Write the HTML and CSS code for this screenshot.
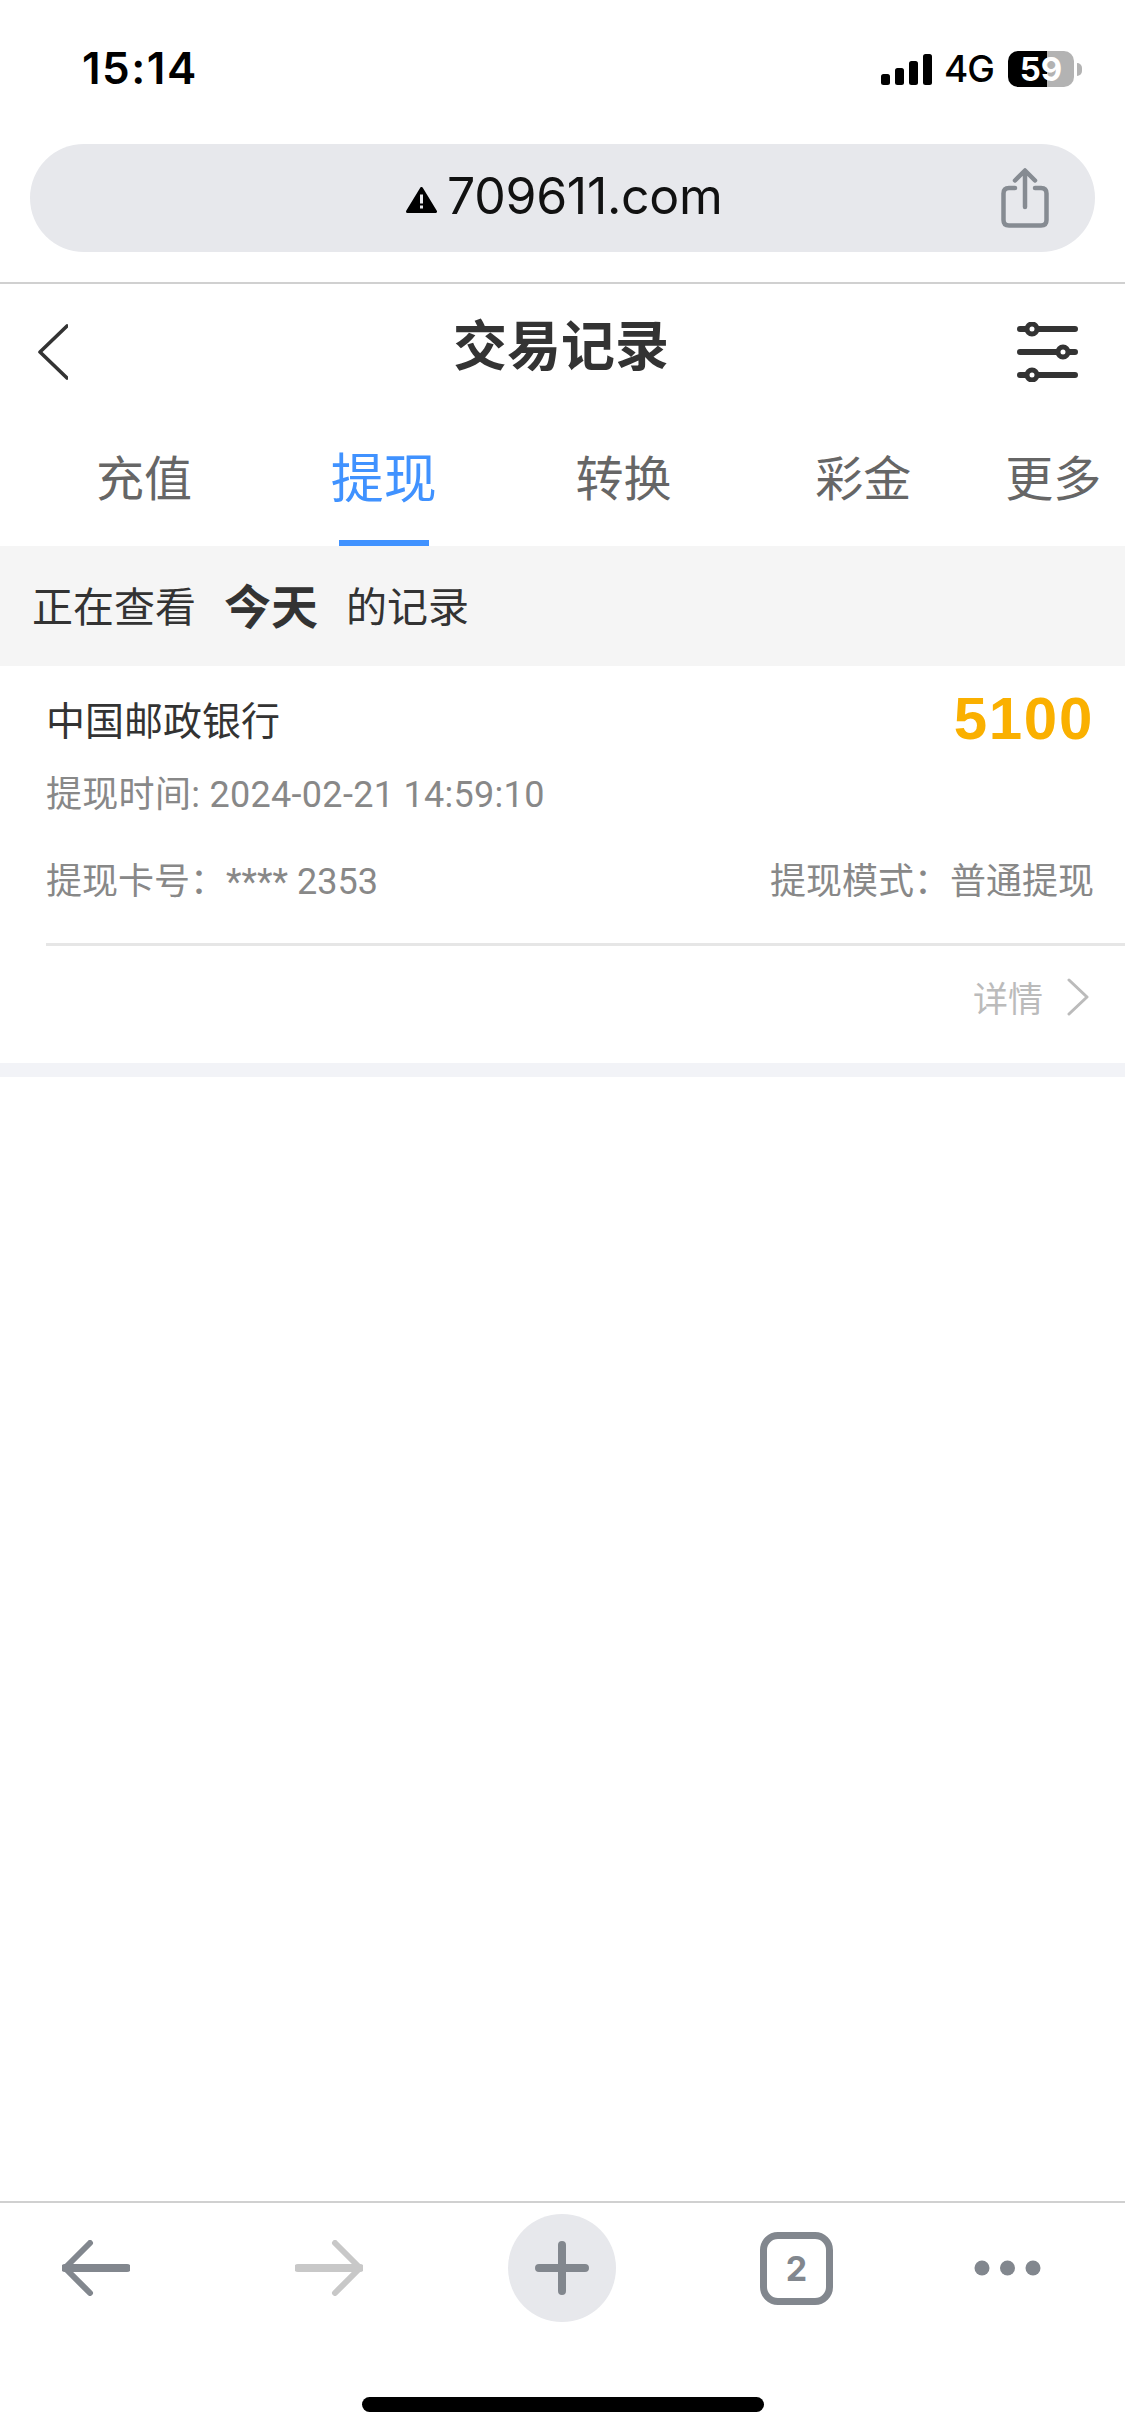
FILE: index.html
```html
<!DOCTYPE html>
<html>
<head>
    <meta charset="utf-8">
    <title>交易记录</title>
    <link rel="stylesheet" href="styles.css">
</head>
<body>
<div class="screen">
    <div class="status-bar">
        <span class="clock">15:14</span>
        <div class="status-right">
            <svg class="signal" width="51" height="31" viewBox="0 0 51 31">
                <rect x="0" y="20" width="9" height="11" rx="2.5"/>
                <rect x="14" y="14" width="9" height="17" rx="2.5"/>
                <rect x="28" y="7" width="9" height="24" rx="2.5"/>
                <rect x="42" y="0" width="9" height="31" rx="2.5"/>
            </svg>
            <span class="network">4G</span>
            <div class="battery"><span>59</span></div>
            <div class="battery-nub"></div>
        </div>
    </div>

    <div class="url-bar">
        <div class="url-text">
            <svg class="warn" width="31" height="26" viewBox="0 0 31 26">
                <path d="M15.5 1.5 L29.5 24.5 L1.5 24.5 Z" fill="#000" stroke="#000" stroke-width="3" stroke-linejoin="round"/>
                <rect x="14" y="7.5" width="3" height="9" fill="#e7e8ec"/>
                <rect x="14" y="18.5" width="3" height="3" fill="#e7e8ec"/>
            </svg>
            <span class="url-name">709611.com</span>
        </div>
        <svg class="share" width="48" height="60" viewBox="0 0 48 60" fill="none" stroke="#868b92" stroke-width="4.5" stroke-linecap="round" stroke-linejoin="round">
            <path d="M14 20 H8 Q2.500 20 2.500 25.500 V52 Q2.500 57.500 8 57.500 H40 Q45.500 57.500 45.500 52 V25.500 Q45.500 20 40 20 H34"/>
            <path d="M24 39 V3 M14 12.500 L24 2.500 L34 12.500"/>
        </svg>
    </div>

    <div class="page-head">
        <svg class="back" width="30" height="56" viewBox="0 0 30 56" fill="none" stroke="#333" stroke-width="3.6" stroke-linecap="round" stroke-linejoin="round">
            <path d="M29 2 L2 28 L29 54" />
        </svg>
        <h1>交易记录</h1>
        <svg class="filter" width="61" height="60" viewBox="0 0 61 60" fill="none" stroke="#333" stroke-width="6" stroke-linecap="round">
            <path d="M3 7 H58 M3 30 H58 M3 53 H58"/>
            <circle cx="15" cy="7" r="5" fill="#fff" stroke-width="5"/>
            <circle cx="46" cy="30" r="5" fill="#fff" stroke-width="5"/>
            <circle cx="15" cy="53" r="5" fill="#fff" stroke-width="5"/>
        </svg>
    </div>

    <div class="tabs">
        <div class="tab">充值</div>
        <div class="tab active">提现</div>
        <div class="tab">转换</div>
        <div class="tab">彩金</div>
        <div class="tab last">更多</div>
    </div>

    <div class="range-bar">
        <span>正在查看</span>
        <strong>今天</strong>
        <span>的记录</span>
    </div>

    <div class="record">
        <div class="record-top">
            <span class="bank">中国邮政银行</span>
            <span class="amount">5100</span>
        </div>
        <div class="record-line time-line">提现时间: 2024-02-21 14:59:10</div>
        <div class="record-line card-line">
            <span>提现卡号：**** 2353</span>
            <span>提现模式：普通提现</span>
        </div>
        <div class="record-foot">
            <span>详情</span>
            <svg width="23" height="38" viewBox="0 0 23 38" fill="none" stroke="#bbb" stroke-width="3" stroke-linecap="round" stroke-linejoin="round">
                <path d="M2 2 L20 19 L2 36"/>
            </svg>
        </div>
    </div>
    <div class="record-gap"></div>

    <div class="spacer"></div>

    <div class="toolbar">
        <svg width="68" height="56" viewBox="0 0 68 56" fill="none" stroke="#82878e" stroke-width="6" stroke-linecap="round" stroke-linejoin="round">
            <path d="M28 3 L3 28 L28 53"/>
            <path d="M3 28 H65" stroke-width="8"/>
        </svg>
        <svg class="forward" width="68" height="56" viewBox="0 0 68 56" fill="none" stroke="#c8c8c8" stroke-width="6" stroke-linecap="round" stroke-linejoin="round">
            <path d="M40 3 L65 28 L40 53"/>
            <path d="M65 28 H3" stroke-width="8"/>
        </svg>
        <div class="plus-btn">
            <svg width="54" height="54" viewBox="0 0 54 54" fill="none" stroke="#82878e" stroke-width="8" stroke-linecap="round">
                <path d="M27 4 V50 M4 27 H50"/>
            </svg>
        </div>
        <div class="tab-count">2</div>
        <svg class="dots" width="67" height="16" viewBox="0 0 67 16" fill="#82878e">
            <circle cx="8" cy="8" r="7.500"/>
            <circle cx="33.500" cy="8" r="7.500"/>
            <circle cx="59" cy="8" r="7.500"/>
        </svg>
    </div>
    <div class="home-area">
        <div class="home-bar"></div>
    </div>
</div>
</body>
</html>
```

FILE: styles.css
```css
* {
  box-sizing: border-box;
}

body {
  margin: 0;
  background-color: #fff;
  font-family: Inter, "Noto Sans CJK SC", sans-serif;
}

.screen {
  width: 1125px;
  height: 2436px;
  display: flex;
  flex-direction: column;
  overflow: hidden;
}

/* Phone status bar */
.status-bar {
  height: 144px;
  padding: 48px 43px 0 82px;
  display: flex;
  justify-content: space-between;
  align-items: flex-start;
}

.clock {
  font-size: 44px;
  line-height: 40px;
  font-weight: 600;
  letter-spacing: 1.500px;
  color: #000;
}

.status-right {
  display: flex;
  align-items: center;
  margin-top: 3px;
}

.signal {
  margin-right: 12px;
}

.network {
  font-size: 37px;
  line-height: 36px;
  font-weight: 500;
  letter-spacing: -1px;
  color: #000;
  margin-right: 14px;
}

.battery {
  width: 66px;
  height: 36px;
  border-radius: 10px;
  background: linear-gradient(to right, #000 59%, #b3b3b3 59%);
  color: #fff;
  font-size: 33px;
  font-weight: 700;
  line-height: 36px;
  text-align: center;
}

.battery-nub {
  width: 5px;
  height: 13px;
  margin-left: 3px;
  border-radius: 0 6px 6px 0;
  background-color: #b3b3b3;
}

/* Browser address bar */
.url-bar {
  height: 108px;
  margin: 0 30px;
  padding-right: 46px;
  border-radius: 54px;
  background-color: #e7e8ec;
  display: flex;
  align-items: center;
  position: relative;
  justify-content: flex-end;
}

.url-text {
  position: absolute;
  left: 376px;
  top: 0;
  height: 108px;
  display: flex;
  align-items: center;
  font-size: 50px;
  letter-spacing: -0.300px;
  color: #111;
}

.url-name {
  margin-top: -5px;
}

.warn {
  margin-right: 10px;
  margin-top: 4px;
}

/* Page header */
.page-head {
  margin-top: 30px;
  border-top: 2px solid #d0d0d0;
  height: 138px;
  padding: 0 47px 0 38px;
  display: grid;
  grid-template-columns: 1fr auto 1fr;
  align-items: center;
}

.page-head h1 {
  margin: -10px 0 0 6px;
  font-size: 54px;
  font-weight: 700;
  color: #333;
  line-height: 60px;
}

.filter {
  justify-self: end;
}

/* Tabs */
.tabs {
  height: 126px;
  padding-left: 24px;
  display: flex;
}

.tab {
  width: 240px;
  padding-top: 24px;
  text-align: center;
  font-size: 48px;
  line-height: 70px;
  color: #666;
  position: relative;
}

.tab.active {
  color: #4092ff;
  font-size: 53px;
  line-height: 66px;
  padding-top: 26px;
}

.tab.active::after {
  content: "";
  position: absolute;
  left: 75px;
  bottom: 0;
  width: 90px;
  height: 6px;
  background-color: #4092ff;
}

.tab.last {
  width: 142px;
  padding-left: 22px;
  text-align: left;
}

/* Date range band */
.range-bar {
  height: 120px;
  padding: 0 0 5px 32px;
  background-color: #f5f5f5;
  display: flex;
  align-items: center;
  gap: 28px;
  font-size: 41px;
  color: #333;
}

.range-bar strong {
  font-size: 47px;
}

/* Record card */
.record {
  padding: 19px 0 0 46px;
}

.record-top {
  height: 66px;
  padding-right: 31px;
  display: flex;
  justify-content: space-between;
  align-items: center;
}

.bank {
  font-size: 39px;
  color: #333;
}

.amount {
  font-family: "Liberation Sans", sans-serif;
  font-size: 60px;
  font-weight: 700;
  letter-spacing: 1.700px;
  color: #fab000;
}

.record-line {
  font-family: Roboto, "Noto Sans CJK SC", sans-serif;
  font-size: 36px;
  line-height: 44px;
  color: #888;
}

.time-line {
  margin-top: 22px;
  letter-spacing: 0.300px;
}

.card-line {
  margin-top: 43px;
  padding-right: 31px;
  display: flex;
  justify-content: space-between;
}

.record-foot {
  margin-top: 39px;
  height: 120px;
  padding: 0 35px 16px 0;
  border-top: 3px solid #e6e6e6;
  display: flex;
  justify-content: flex-end;
  align-items: center;
  gap: 24px;
  font-size: 35px;
  color: #bbb;
}

.record-gap {
  height: 14px;
  background-color: #f2f3f7;
}

.spacer {
  flex: 1;
}

/* Browser toolbar */
.toolbar {
  height: 132px;
  border-top: 2px solid #d0d0d0;
  padding-left: 62px;
  display: flex;
  gap: 145px;
  align-items: center;
}

.forward {
  margin-left: 20px;
}

.plus-btn {
  width: 108px;
  height: 108px;
  border-radius: 50%;
  background-color: #e7e8ec;
  display: flex;
  justify-content: center;
  align-items: center;
}

.tab-count {
  width: 73px;
  height: 73px;
  margin-left: -1px;
  border: 7px solid #82878e;
  border-radius: 18px;
  font-size: 34px;
  font-weight: 700;
  line-height: 59px;
  text-align: center;
  color: #82878e;
}

.dots {
  margin-left: -4px;
}

.home-area {
  height: 103px;
  padding-top: 64px;
  display: flex;
  justify-content: center;
}

.home-bar {
  width: 402px;
  height: 15px;
  border-radius: 8px;
  background-color: #000;
}
```
